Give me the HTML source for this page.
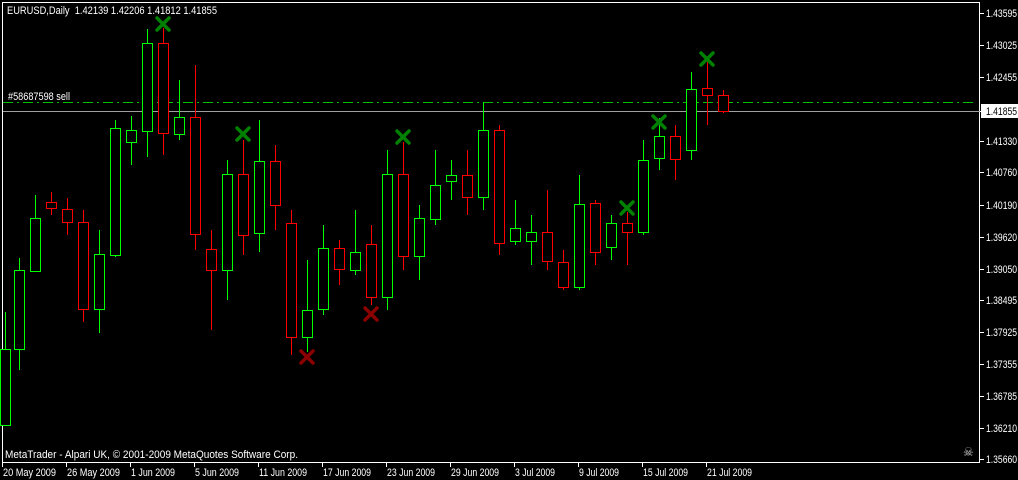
<!DOCTYPE html>
<html><head><meta charset="utf-8"><style>
body{margin:0;background:#000;width:1018px;height:480px;overflow:hidden}
svg{display:block}
text{font-family:"Liberation Sans","DejaVu Sans",sans-serif;font-size:11px;fill:#fff}
</style></head><body>
<svg id="s" width="1018" height="480" xmlns="http://www.w3.org/2000/svg" shape-rendering="crispEdges">
<rect width="1018" height="480" fill="#000"/>
<rect x="2.5" y="2.5" width="977" height="460" fill="none" stroke="#fff"/>
<line x1="3" y1="102.5" x2="975" y2="102.5" stroke="#00c000" stroke-dasharray="10,4,2,4"/>
<line x1="3" y1="111.5" x2="980" y2="111.5" stroke="#a0a0a0"/>
<g id="c"></g>
<text x="7" y="14" textLength="210" lengthAdjust="spacingAndGlyphs" xml:space="preserve">EURUSD,Daily  1.42139 1.42206 1.41812 1.41855</text>
<text x="8" y="100" textLength="62" lengthAdjust="spacingAndGlyphs">#58687598 sell</text>
<text x="5" y="458" textLength="293" lengthAdjust="spacingAndGlyphs">MetaTrader - Alpari UK, © 2001-2009 MetaQuotes Software Corp.</text>
<g id="ax">
<text x="986" y="17" textLength="31" lengthAdjust="spacingAndGlyphs">1.43595</text>
<text x="986" y="49" textLength="31" lengthAdjust="spacingAndGlyphs">1.43025</text>
<text x="986" y="81" textLength="31" lengthAdjust="spacingAndGlyphs">1.42455</text>
<rect x="981" y="104" width="37" height="14" fill="#fff"/>
<text x="986" y="115" textLength="31" lengthAdjust="spacingAndGlyphs" style="fill:#000">1.41855</text>
<text x="986" y="145" textLength="31" lengthAdjust="spacingAndGlyphs">1.41330</text>
<text x="986" y="176" textLength="31" lengthAdjust="spacingAndGlyphs">1.40760</text>
<text x="986" y="209" textLength="31" lengthAdjust="spacingAndGlyphs">1.40190</text>
<text x="986" y="241" textLength="31" lengthAdjust="spacingAndGlyphs">1.39620</text>
<text x="986" y="273" textLength="31" lengthAdjust="spacingAndGlyphs">1.39050</text>
<text x="986" y="304" textLength="31" lengthAdjust="spacingAndGlyphs">1.38495</text>
<text x="986" y="336" textLength="31" lengthAdjust="spacingAndGlyphs">1.37925</text>
<text x="986" y="368" textLength="31" lengthAdjust="spacingAndGlyphs">1.37355</text>
<text x="986" y="400" textLength="31" lengthAdjust="spacingAndGlyphs">1.36785</text>
<text x="986" y="432" textLength="31" lengthAdjust="spacingAndGlyphs">1.36210</text>
<text x="986" y="463" textLength="31" lengthAdjust="spacingAndGlyphs">1.35660</text>
</g>
<g>
<text x="3" y="476" textLength="53" lengthAdjust="spacingAndGlyphs">20 May 2009</text>
<text x="67" y="476" textLength="53" lengthAdjust="spacingAndGlyphs">26 May 2009</text>
<text x="131" y="476" textLength="44" lengthAdjust="spacingAndGlyphs">1 Jun 2009</text>
<text x="195" y="476" textLength="44" lengthAdjust="spacingAndGlyphs">5 Jun 2009</text>
<text x="259" y="476" textLength="48" lengthAdjust="spacingAndGlyphs">11 Jun 2009</text>
<text x="323" y="476" textLength="48" lengthAdjust="spacingAndGlyphs">17 Jun 2009</text>
<text x="387" y="476" textLength="48" lengthAdjust="spacingAndGlyphs">23 Jun 2009</text>
<text x="451" y="476" textLength="48" lengthAdjust="spacingAndGlyphs">29 Jun 2009</text>
<text x="515" y="476" textLength="40" lengthAdjust="spacingAndGlyphs">3 Jul 2009</text>
<text x="579" y="476" textLength="40" lengthAdjust="spacingAndGlyphs">9 Jul 2009</text>
<text x="643" y="476" textLength="45" lengthAdjust="spacingAndGlyphs">15 Jul 2009</text>
<text x="707" y="476" textLength="45" lengthAdjust="spacingAndGlyphs">21 Jul 2009</text>
</g>
<text x="963" y="456" style="font-size:12px;fill:#ccc">☠</text>
</svg>
<script>
var g=document.getElementById('c'),ns='http://www.w3.org/2000/svg',s=document.getElementById('s');
function el(n,a,p){var e=document.createElementNS(ns,n);for(var k in a)e.setAttribute(k,a[k]);(p||g).appendChild(e);return e}
var C=[[5,'g',349,425,312,425],[19,'g',270,349,258,370],[35,'g',218,271,195,272],[51,'r',202,208,192,215],[67,'r',209,222,198,235],[83,'r',222,309,210,322],[99,'g',254,309,230,333],[115,'g',128,255,120,257],[131,'g',130,142,116,165],[147,'g',43,131,29,157],[163,'r',43,133,28,155],[179,'g',117,134,80,140],[195,'r',117,234,65,250],[211,'r',249,270,230,330],[227,'g',174,270,160,300],[243,'r',174,235,140,255],[259,'g',161,233,120,252],[275,'r',161,205,145,230],[291,'r',223,337,210,355],[307,'g',310,337,260,352],[323,'g',248,309,225,315],[339,'r',248,269,240,285],[355,'g',252,270,210,275],[371,'r',244,297,225,305],[387,'g',174,297,150,310],[403,'r',174,256,142,270],[419,'g',218,256,205,280],[435,'g',185,219,150,225],[451,'g',175,181,160,200],[467,'r',175,197,150,215],[483,'g',130,197,102,210],[499,'r',130,243,125,255],[515,'g',228,241,200,245],[531,'g',232,241,215,265],[547,'r',232,261,190,270],[563,'r',262,287,250,290],[579,'g',204,287,175,290],[595,'r',203,252,200,265],[611,'g',223,247,215,260],[627,'r',223,232,212,265],[643,'g',160,232,140,235],[659,'g',136,158,118,170],[675,'r',136,159,125,180],[691,'g',89,150,72,160],[707,'r',88,95,62,125],[723,'r',95,111,90,113]];
C.forEach(function(c){var col=c[1]=='g'?'#00ff00':'#ff0000';
el('line',{x1:c[0]+.5,x2:c[0]+.5,y1:c[4],y2:c[5],stroke:col});
el('rect',{x:c[0]-4.5,y:c[2]+.5,width:10,height:Math.max(c[3]-c[2],1),fill:'#000',stroke:col});});
var M=[[163,24,'#008000'],[243,134,'#008000'],[403,137,'#008000'],[627,208,'#008000'],[659,122,'#008000'],[707,59,'#008000'],[307,357,'#8b0000'],[371,314,'#8b0000']];
M.forEach(function(m){var x=m[0],y=m[1];el('path',{d:'M'+(x-6)+' '+(y-6)+'L'+(x+6)+' '+(y+6)+'M'+(x+6)+' '+(y-6)+'L'+(x-6)+' '+(y+6),stroke:m[2],'stroke-width':3.5,'stroke-linecap':'round','shape-rendering':'auto'});});
for(var i=0;i<15;i++){var ys=[13,45,77,111,141,172,205,237,269,300,332,364,396,428,459][i];el('line',{x1:980,x2:984,y1:ys+.5,y2:ys+.5,stroke:'#fff'},s);}
for(var j=0;j<12;j++){var xs=2+64*j;el('line',{x1:xs+.5,x2:xs+.5,y1:463,y2:467,stroke:'#fff'},s);}
</script>
</body></html>
